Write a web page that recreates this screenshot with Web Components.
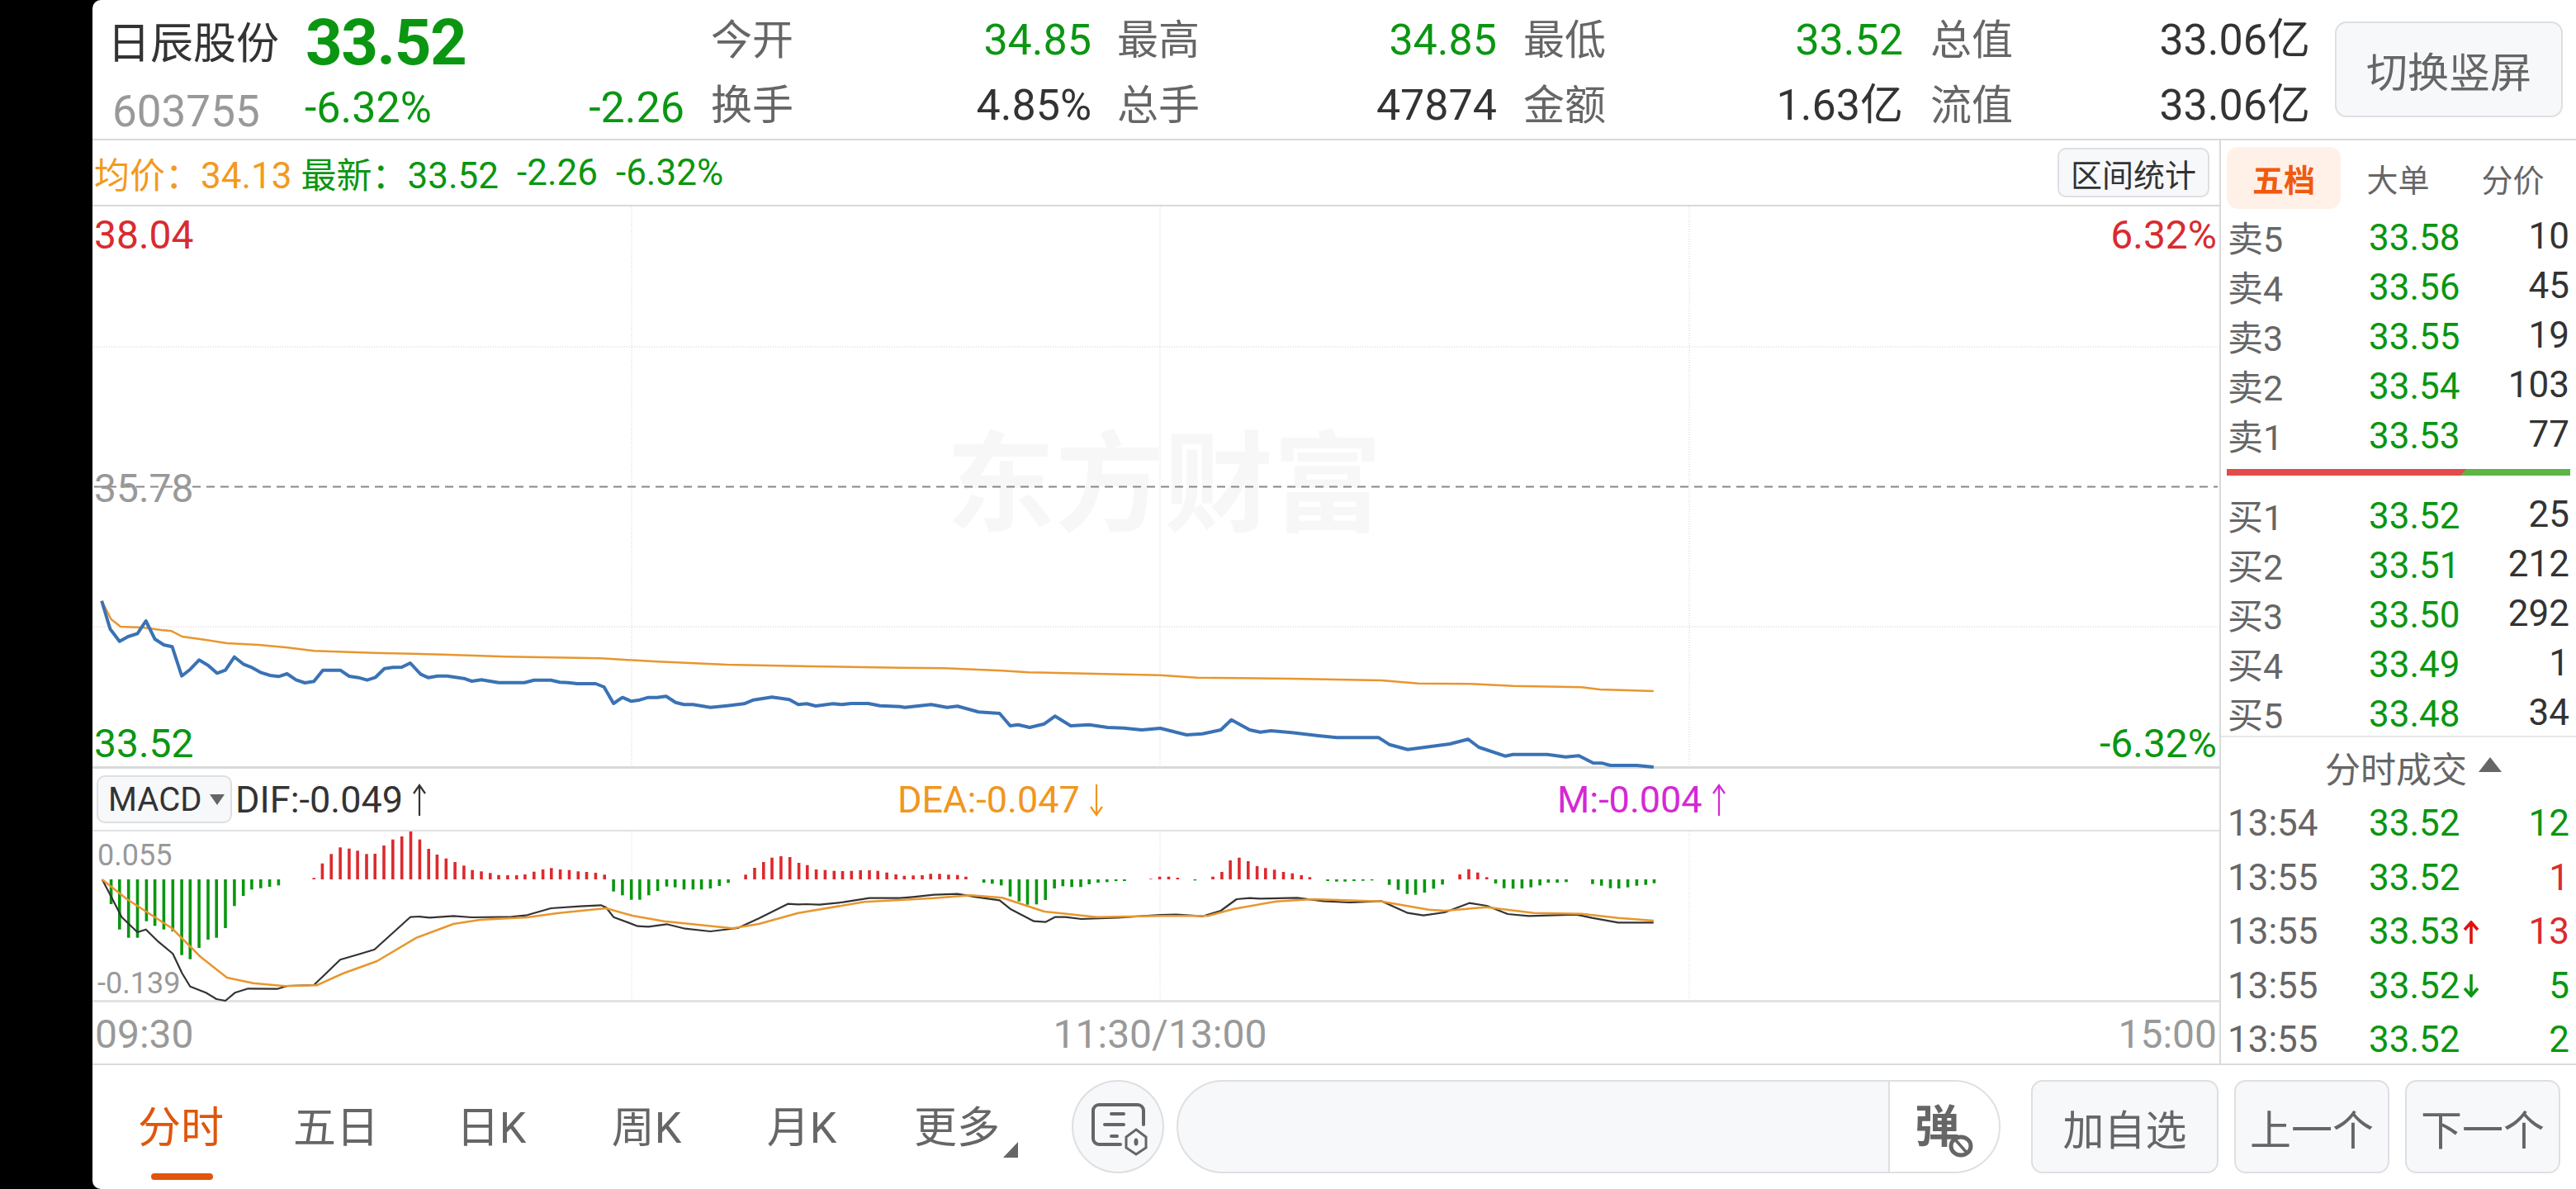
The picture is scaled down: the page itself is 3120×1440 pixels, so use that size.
<!DOCTYPE html>
<html>
<head>
<meta charset="utf-8">
<style>
  html, body { margin:0; padding:0; background:#000; }
  body { font-family: Roboto, "Noto Sans CJK SC", sans-serif; }
</style>
</head>
<body>
<stock-app></stock-app>
<script>
// zoom crops are 1.568x wide, 3x tall, so the traced points get mapped back to page pixels
const mapPts = (arr, x0, y0) => {
  let out = [];
  for (let i = 0; i < arr.length; i += 2) {
    out.push((x0 + arr[i] / 1.568).toFixed(1) + ',' + (y0 + arr[i + 1] / 3).toFixed(1));
  }
  return out.join(' ');
}

const blueA = [52,113,68,215,86,260,102,243,120,232,136,186,153,252,170,273,186,280,204,386,220,362,237,328,254,347,271,376,287,365,304,317,321,343,338,356,355,374,372,384,388,388,404,378,421,400,438,411,455,406,472,365,505,365,522,387,540,392,556,401,572,391,589,359,605,355,622,354,638,339,658,380,672,392,690,386,708,386,740,395,755,405,773,400,806,410,855,410,873,401,905,401,922,409,938,410,955,414,990,414,1006,426,1024,486,1041,464,1058,478,1074,473,1090,464,1107,464,1124,460,1142,482,1158,490,1175,490,1208,500,1240,494,1272,487,1290,473,1325,463,1358,472,1375,490,1391,487,1408,495,1441,487,1458,490,1475,486,1508,486,1530,494,1568,497];
const blueB = [25,1070,50,1065,75,1060,105,1070,125,1066,165,1087,205,1092,225,1137,240,1133,262,1143,290,1130,310,1102,340,1137,375,1133,410,1143,440,1145,475,1152,510,1146,560,1170,590,1166,625,1152,645,1115,680,1152,700,1160,720,1155,760,1162,810,1173,845,1180,925,1180,945,1205,980,1223,1060,1203,1095,1186,1115,1215,1165,1247,1180,1241,1245,1241,1280,1250,1305,1246,1332,1272,1350,1273,1365,1281,1415,1281,1447,1287];
const avgA = [52,113,70,180,88,207,130,210,165,219,185,223,205,243,250,255,290,267,350,273,405,283,455,295,570,302,700,308,820,316,1000,322,1100,333,1240,345,1400,351,1568,356];
const avgB = [100,928,210,937,260,943,510,953,580,962,760,966,930,972,1000,983,1100,985,1180,992,1310,997,1345,1005,1447,1011];
const difA = [53,409,70,470,90,545,120,600,136,590,160,635,187,678,205,750,220,797,250,820,270,843,287,849,305,820,330,805,385,806,405,795,455,792,505,700,540,680,570,663,638,545,655,543,675,547,720,541,755,546,830,544,860,538,905,513,960,506,1000,502,1010,510,1024,545,1070,578,1090,580,1125,571,1160,587,1208,597,1260,585,1300,550,1355,497,1375,499,1390,498,1415,500,1460,491,1510,476,1568,476];
const difB = [40,472,80,464,125,461,160,472,205,484,225,515,270,560,292,563,310,545,330,545,360,552,430,547,510,537,540,536,590,542,625,522,655,480,680,476,700,478,770,475,820,487,870,492,930,487,980,530,1010,539,1050,528,1097,494,1130,504,1170,534,1210,541,1300,536,1330,548,1380,565,1447,565];
const deaA = [53,409,100,480,185,585,240,690,290,765,340,785,400,796,460,793,510,750,575,705,650,620,720,570,770,555,860,546,920,530,1010,513,1060,540,1120,560,1250,586,1300,570,1375,530,1500,490,1568,483];
const deaB = [80,476,150,466,210,475,290,525,390,545,510,541,600,541,650,515,730,488,800,480,930,488,1020,518,1050,522,1130,509,1220,530,1310,533,1380,548,1447,558];
const barsA = [70,498,86,590,103,620,120,620,137,560,153,577,170,590,187,597,204,683,220,698,237,657,254,627,270,620,287,585,304,505,321,468,337,445,354,440,371,435,388,430,455,403,471,350,488,316,505,292,522,296,538,304,555,316,571,315,588,285,605,263,622,252,639,234,656,263,673,297,689,318,706,332,723,345,740,358,756,374,773,379,790,385,806,392,823,393,840,393,856,390,873,380,890,372,906,367,923,372,940,374,957,379,973,381,990,384,1007,391,1024,452,1041,466,1058,482,1074,482,1091,466,1108,450,1125,434,1141,437,1158,445,1175,445,1191,445,1208,441,1225,432,1242,421,1275,391,1292,366,1309,345,1325,329,1342,324,1359,327,1376,348,1392,356,1409,372,1426,374,1443,377,1459,378,1476,377,1493,375,1510,375,1526,377,1543,383];
const barsB = [8,390,24,395,41,394,58,393,74,388,91,388,108,391,125,392,141,398,175,420,191,424,208,430,225,470,242,488,258,500,275,499,292,483,309,441,325,433,342,436,359,436,375,426,392,420,409,418,426,414,442,414,492,406,509,398,526,398,543,402,576,412,610,398,627,381,643,339,660,329,677,342,694,360,710,367,727,373,744,381,761,386,778,393,794,400,828,414,845,416,861,416,878,414,895,413,912,412,945,428,962,446,979,461,995,464,1012,456,1029,442,1046,427,1079,390,1096,371,1113,383,1130,400,1147,423,1163,440,1180,442,1197,441,1214,437,1231,430,1247,420,1264,420,1281,418,1331,425,1348,431,1365,440,1381,441,1398,437,1415,431,1432,428,1448,422];

const macdBars = (arr, x0) => {
  let out = '';
  for (let i = 0; i < arr.length; i += 2) {
    let x = x0 + arr[i] / 1.568, y = 930 + arr[i + 1] / 3, up = y < 1066;
    out += `<rect x="${(x - 1.8).toFixed(1)}" y="${(up ? y : 1066).toFixed(1)}" width="3.6" height="${Math.abs(y - 1066).toFixed(1)}" fill="${up ? '#dc2a2e' : '#0a9611'}"/>`;
  }
  return out;
}

class StatCell extends HTMLElement {
  connectedCallback() {
    const tone = this.getAttribute('tone') === 'green' ? 'var(--green)' : '#333';
    this.attachShadow({mode: 'open'}).innerHTML = `
      <style>
        :host { display:flex; justify-content:space-between; align-items:baseline; height:79px; line-height:79px; }
        .label { font-size:50px; color:#666; }
        .value { font-size:52px; color:${tone}; }
      </style>
      <span class="label">${this.getAttribute('label')}</span>
      <span class="value"><slot></slot></span>`;
  }
}
customElements.define('stat-cell', StatCell);

class SoftButton extends HTMLElement {
  connectedCallback() {
    this.attachShadow({mode: 'open'}).innerHTML = `
      <style>
        :host { display:flex; align-items:center; justify-content:center; box-sizing:border-box; background:#f7f8fa;
                border:2px solid #dedfe2; border-radius:14px; color:var(--btn-color, #666); font-size:var(--btn-size, 50px); }
      </style>
      <slot></slot>`;
  }
}
customElements.define('soft-button', SoftButton);

class QuoteHeader extends HTMLElement {
  connectedCallback() {
    this.attachShadow({mode: 'open'}).innerHTML = `
      <style>
        :host { display:flex; box-sizing:border-box; height:170px; padding:9px 0 0 20px; border-bottom:2px solid #d9d9d9; }
        .id { width:240px; }
        .name { font-size:52px; color:#333; line-height:52px; margin:19px 0 0 -2px; height:59px; }
        .code { font-size:53px; color:#999; line-height:79px; margin-left:4px; margin-top:9px; }
        .move { width:457px; }
        .last { font-size:78px; letter-spacing:-1.5px; font-weight:700; color:var(--green); line-height:79px; height:79px; margin:3px 0 0 -2px; }
        .pct { display:flex; justify-content:space-between; font-size:52px; color:var(--green); line-height:79px; margin-left:-3px; }
        .col { display:block; }
        soft-button { width:276px; height:116px; margin:17px 0 0 30px; }
      </style>
      <div class="id"><div class="name">日辰股份</div><div class="code">603755</div></div>
      <div class="move"><div class="last">33.52</div><div class="pct"><span>-6.32%</span><span>-2.26</span></div></div>
      <div class="col" style="width:461px;margin-left:32px">
        <stat-cell label="今开" tone="green">34.85</stat-cell>
        <stat-cell label="换手">4.85%</stat-cell>
      </div>
      <div class="col" style="width:460px;margin-left:31px">
        <stat-cell label="最高" tone="green">34.85</stat-cell>
        <stat-cell label="总手">47874</stat-cell>
      </div>
      <div class="col" style="width:460px;margin-left:32px">
        <stat-cell label="最低" tone="green">33.52</stat-cell>
        <stat-cell label="金额">1.63亿</stat-cell>
      </div>
      <div class="col" style="width:460px;margin-left:33px">
        <stat-cell label="总值">33.06亿</stat-cell>
        <stat-cell label="流值">33.06亿</stat-cell>
      </div>
      <soft-button>切换竖屏</soft-button>`;
  }
}
customElements.define('quote-header', QuoteHeader);

class RangeLegend extends HTMLElement {
  connectedCallback() {
    this.attachShadow({mode: 'open'}).innerHTML = `
      <style>
        :host { display:flex; align-items:center; box-sizing:border-box; height:80px; padding:0 12px 0 2px; font-size:44px;
                color:var(--green); border-bottom:2px solid #d9d9d9; white-space:nowrap; }
        .avg { color:#f29a1e; margin-right:11px; }
        .cn { font-size:43px; }
        .gap { margin-left:22px; }
        soft-button { margin-left:auto; width:184px; height:60px; --btn-color:#333; --btn-size:38px; border-radius:10px; }
      </style>
      <span class="avg"><span class="cn">均价：</span>34.13</span>
      <span><span class="cn">最新：</span>33.52</span><span class="gap">-2.26</span><span class="gap">-6.32%</span>
      <soft-button>区间统计</soft-button>`;
  }
}
customElements.define('range-legend', RangeLegend);

class PriceChart extends HTMLElement {
  connectedCallback() {
    let vlines = [765, 1405, 2046].map(x => `<line x1="${x}" y1="250" x2="${x}" y2="928"/>`).join('');
    this.attachShadow({mode: 'open'}).innerHTML = `
      <style>
        :host { display:block; position:relative; height:681px; box-sizing:border-box; border-bottom:3px solid #d9d9d9; font-size:48px; line-height:48px; }
        svg { position:absolute; left:0; top:0; overflow:visible; }
        span { position:absolute; }
        .mark { left:1034px; top:272px; font-size:132px; line-height:132px; font-weight:700; color:#f7f7f7; white-space:nowrap; }
        .l { left:2px; } .r { right:3px; }
        .up { color:#d92b2f; } .down { color:var(--green); } .mid { color:#999; }
      </style>
      <span class="mark">东方财富</span>
      <svg width="2576" height="680" viewBox="112 250 2576 680">
        <g stroke="#cfcfcf" stroke-width="1" stroke-dasharray="1 2">
          ${vlines}
          <line x1="114" y1="420" x2="2686" y2="420"/>
          <line x1="114" y1="759" x2="2686" y2="759"/>
        </g>
        <line x1="114" y1="589.5" x2="2686" y2="589.5" stroke="#888" stroke-width="2" stroke-dasharray="10 7"/>
        <polyline fill="none" stroke="#e8962e" stroke-width="2.5" stroke-linejoin="round" points="${mapPts(avgA, 90, 690)} ${mapPts(avgB, 1080, 500)}"/>
        <polyline fill="none" stroke="#3a72b5" stroke-width="4" stroke-linejoin="round" points="${mapPts(blueA, 90, 690)} ${mapPts(blueB, 1080, 500)}"/>
      </svg>
      <span class="l up" style="top:11px">38.04</span>
      <span class="r up" style="top:11px">6.32%</span>
      <span class="l mid" style="top:318px">35.78</span>
      <span class="l down" style="top:627px">33.52</span>
      <span class="r down" style="top:627px">-6.32%</span>`;
  }
}
customElements.define('price-chart', PriceChart);

class MacdChart extends HTMLElement {
  connectedCallback() {
    const arrow = (c, down) => `<svg width="16" height="40" viewBox="0 0 16 40" fill="none" stroke="${c}" stroke-width="2.2">
      ${down ? '<path d="M8 1V38M1 28L8 38L15 28"/>' : '<path d="M8 39V2M1 12L8 2L15 12"/>'}</svg>`;
    let vlines = [765, 1405, 2046].map(x => `<line x1="${x}" y1="1008" x2="${x}" y2="1212"/>`).join('');
    this.attachShadow({mode: 'open'}).innerHTML = `
      <style>
        :host { display:block; }
        .head { display:grid; grid-template-columns:168px 802px 799px 1fr; align-items:center; height:74px; padding-left:5px; font-size:45px; border-bottom:2px solid #e2e2e2; box-sizing:content-box; }
        .item { display:flex; align-items:center; gap:12px; padding-top:1px; }
        .dif { color:#333; } .dea { color:#f0961e; } .m { color:#d428d4; }
        soft-button { width:164px; height:58px; --btn-color:#333; --btn-size:40px; border-radius:10px; justify-content:flex-start; padding-left:12px; }
        i { display:inline-block; border:solid transparent; border-width:13px 9px 0; border-top-color:#666; margin-left:10px; }
        .plot { position:relative; height:204px; border-bottom:3px solid #e2e2e2; }
        .plot svg { position:absolute; left:0; top:0; overflow:visible; }
        .plot span { position:absolute; left:6px; font-size:36px; line-height:36px; color:#999; }
        .axis { display:flex; justify-content:space-between; height:73px; line-height:77px; padding:0 3px; font-size:48px; color:#999; }
        .axis .c { margin-left:10px; }
      </style>
      <div class="head">
        <soft-button>MACD<i></i></soft-button>
        <div class="item dif">DIF:-0.049${arrow('#333')}</div>
        <div class="item dea">DEA:-0.047${arrow('#f0961e', true)}</div>
        <div class="item m">M:-0.004${arrow('#d428d4')}</div>
      </div>
      <div class="plot">
        <svg width="2576" height="206" viewBox="112 1008 2576 206">
          <g stroke="#d8d8d8" stroke-width="1" stroke-dasharray="1 2">${vlines}</g>
          ${macdBars(barsA, 90)}${macdBars(barsB, 1080)}
          <polyline fill="none" stroke="#333" stroke-width="2.2" stroke-linejoin="round" points="${mapPts(difA, 90, 930)} ${mapPts(difB, 1080, 930)}"/>
          <polyline fill="none" stroke="#e8962e" stroke-width="2.5" stroke-linejoin="round" points="${mapPts(deaA, 90, 930)} ${mapPts(deaB, 1080, 930)}"/>
        </svg>
        <span style="top:11px">0.055</span>
        <span style="top:166px">-0.139</span>
      </div>
      <div class="axis"><span>09:30</span><span class="c">11:30/13:00</span><span>15:00</span></div>`;
  }
}
customElements.define('macd-chart', MacdChart);

class BookRow extends HTMLElement {
  connectedCallback() {
    const tone = this.getAttribute('tone');
    const color = tone === 'red' ? '#d92b2f' : tone === 'green' ? 'var(--green)' : '#333';
    const mark = this.getAttribute('mark');
    const label = this.getAttribute('label');
    let arrow = '';
    if (mark === 'up') arrow = '<svg width="20" height="28" viewBox="0 0 20 28" fill="none" stroke="#e01010" stroke-width="3.6"><path d="M10 28V2M2 11L10 2L18 11"/></svg>';
    if (mark === 'down') arrow = '<svg width="20" height="28" viewBox="0 0 20 28" fill="none" stroke="#0a9611" stroke-width="3.6"><path d="M10 0V26M2 17L10 26L18 17"/></svg>';
    this.attachShadow({mode: 'open'}).innerHTML = `
      <style>
        :host { display:grid; grid-template-columns:171px 1fr auto; height:var(--row-h, 60px); line-height:var(--row-h, 60px); font-size:44px; color:#666; white-space:nowrap; }
        .price { color:var(--green); display:flex; align-items:center; gap:3px; }
        .qty { color:${color}; }
        .cn { font-size:43px; padding-top:4px; }
      </style>
      <span class="${label.includes(':') ? '' : 'cn'}">${label}</span>
      <span class="price">${this.getAttribute('price')}${arrow}</span>
      <span class="qty">${this.getAttribute('qty')}</span>`;
  }
}
customElements.define('book-row', BookRow);

class OrderPanel extends HTMLElement {
  connectedCallback() {
    this.attachShadow({mode: 'open'}).innerHTML = `
      <style>
        :host { display:block; box-sizing:border-box; width:432px; height:1118px; border-left:2px solid #d9d9d9; }
        .tabs { display:grid; grid-template-columns:138px 139px 139px; height:86px; padding:8px 0 0 7px; box-sizing:border-box; font-size:38px; color:#666; }
        .tabs span { display:flex; align-items:center; justify-content:center; height:75px; }
        .tabs .on { background:#fff0e8; color:#f05a0f; border-radius:14px; font-weight:700; }
        .list { padding:0 8px; }
        .bar { display:flex; height:8px; margin:12px 7px 17px; }
        .bar b { background:#e24b4b; flex:286px; clip-path:polygon(0 0,100% 0,calc(100% - 7px) 100%,0 100%); margin-right:-7px; }
        .bar u { background:#5cb544; flex:129px; }
        .buy { height:298px; }
        .title { display:flex; align-items:center; justify-content:center; gap:14px; height:72px; padding-left:36px; font-size:43px; color:#666; border-top:2px solid #e8e8e8; }
        .title i { display:block; border:solid transparent; border-width:0 14px 18px; border-bottom-color:#666; margin-top:-6px; }
        .trades { --row-h:65.5px; height:323px; }
      </style>
      <div class="tabs"><span class="on">五档</span><span>大单</span><span>分价</span></div>
      <div class="list">
        <book-row label="卖5" price="33.58" qty="10"></book-row>
        <book-row label="卖4" price="33.56" qty="45"></book-row>
        <book-row label="卖3" price="33.55" qty="19"></book-row>
        <book-row label="卖2" price="33.54" qty="103"></book-row>
        <book-row label="卖1" price="33.53" qty="77"></book-row>
      </div>
      <div class="bar"><b></b><u></u></div>
      <div class="list buy">
        <book-row label="买1" price="33.52" qty="25"></book-row>
        <book-row label="买2" price="33.51" qty="212"></book-row>
        <book-row label="买3" price="33.50" qty="292"></book-row>
        <book-row label="买4" price="33.49" qty="1"></book-row>
        <book-row label="买5" price="33.48" qty="34"></book-row>
      </div>
      <div class="title">分时成交<i></i></div>
      <div class="list trades">
        <book-row label="13:54" price="33.52" qty="12" tone="green"></book-row>
        <book-row label="13:55" price="33.52" qty="1" tone="red"></book-row>
        <book-row label="13:55" price="33.53" qty="13" tone="red" mark="up"></book-row>
        <book-row label="13:55" price="33.52" qty="5" tone="green" mark="down"></book-row>
        <book-row label="13:55" price="33.52" qty="2" tone="green"></book-row>
      </div>`;
  }
}
customElements.define('order-panel', OrderPanel);

class BottomBar extends HTMLElement {
  connectedCallback() {
    this.attachShadow({mode: 'open'}).innerHTML = `
      <style>
        :host { display:flex; box-sizing:border-box; height:152px; padding:18px 0 0 13px; border-top:2px solid #d9d9d9; font-size:50px; color:#666; }
        .tab { position:relative; width:188px; height:113px; display:flex; align-items:center; justify-content:center; padding-bottom:6px; box-sizing:border-box; white-space:nowrap; font-size:52px; }
        .tab.on { color:#e0560c; }
        .tab.on::after { content:""; position:absolute; left:58px; top:113px; width:75px; height:8px; border-radius:4px; background:#e0560c; }
        .more::after { content:""; position:absolute; left:150px; top:75px; border:solid transparent; border-width:0 0 19px 18px; border-bottom-color:#666; }
        .circle { width:112px; height:113px; margin-left:45px; box-sizing:border-box; border:2px solid #dedfe2; border-radius:50%; background:#f7f8fa; }
        .circle svg { display:block; margin:-2px; }
        .pill { display:flex; width:998px; height:113px; margin-left:15px; box-sizing:border-box; border:2px solid #dedfe2; border-radius:57px; overflow:hidden; background:#f7f8fa; }
        .danmu { position:relative; margin-left:auto; width:134px; background:#fff; border-left:2px solid #dedfe2; font-size:54px; font-weight:700; line-height:111px; padding-left:30px; box-sizing:border-box; }
        .danmu svg { position:absolute; left:70px; top:64px; }
        soft-button { height:113px; width:188px; margin-left:19px; }
        .add { width:227px; margin-left:37px; }
      </style>
      <div class="tab on">分时</div>
      <div class="tab">五日</div>
      <div class="tab">日K</div>
      <div class="tab">周K</div>
      <div class="tab">月K</div>
      <div class="tab more">更多</div>
      <div class="circle">
        <svg width="112" height="113" viewBox="1298 1308 112 113" fill="none" stroke="#666" stroke-width="4" stroke-linecap="round">
          <path d="M1385 1362V1345a7 7 0 0 0-7-7H1331a7 7 0 0 0-7 7V1379a7 7 0 0 0 7 7H1357"/>
          <path d="M1346 1349H1361M1338 1362H1361M1346 1376H1353"/>
          <path stroke-width="3" d="M1376 1368L1388 1377V1390L1376 1398L1364 1390V1377Z"/>
          <ellipse cx="1376" cy="1383" rx="2.5" ry="4.5" fill="#666" stroke="none"/>
        </svg>
      </div>
      <div class="pill"><div class="danmu">弹
        <svg width="32" height="28" viewBox="0 0 32 28" fill="none" stroke="#666" stroke-width="5"><ellipse cx="16" cy="14" rx="12" ry="11" fill="#fff"/><path stroke-width="3.5" d="M8 5L24 23"/></svg>
      </div></div>
      <soft-button class="add">加自选</soft-button>
      <soft-button>上一个</soft-button>
      <soft-button>下一个</soft-button>`;
  }
}
customElements.define('bottom-bar', BottomBar);

class StockApp extends HTMLElement {
  connectedCallback() {
    this.attachShadow({mode: 'open'}).innerHTML = `
      <style>
        :host { display:block; box-sizing:border-box; width:3120px; height:1440px; padding-left:112px; background:#000; --green:#0a9611; overflow:hidden; }
        .page { height:1440px; background:#fff; border-radius:10px 0 0 10px; overflow:hidden; }
        .mid { display:flex; height:1118px; }
        .charts { width:2576px; }
      </style>
      <div class="page">
        <quote-header></quote-header>
        <div class="mid">
          <div class="charts">
            <range-legend></range-legend>
            <price-chart></price-chart>
            <macd-chart></macd-chart>
          </div>
          <order-panel></order-panel>
        </div>
        <bottom-bar></bottom-bar>
      </div>`;
  }
}
customElements.define('stock-app', StockApp);
</script>
</body>
</html>
